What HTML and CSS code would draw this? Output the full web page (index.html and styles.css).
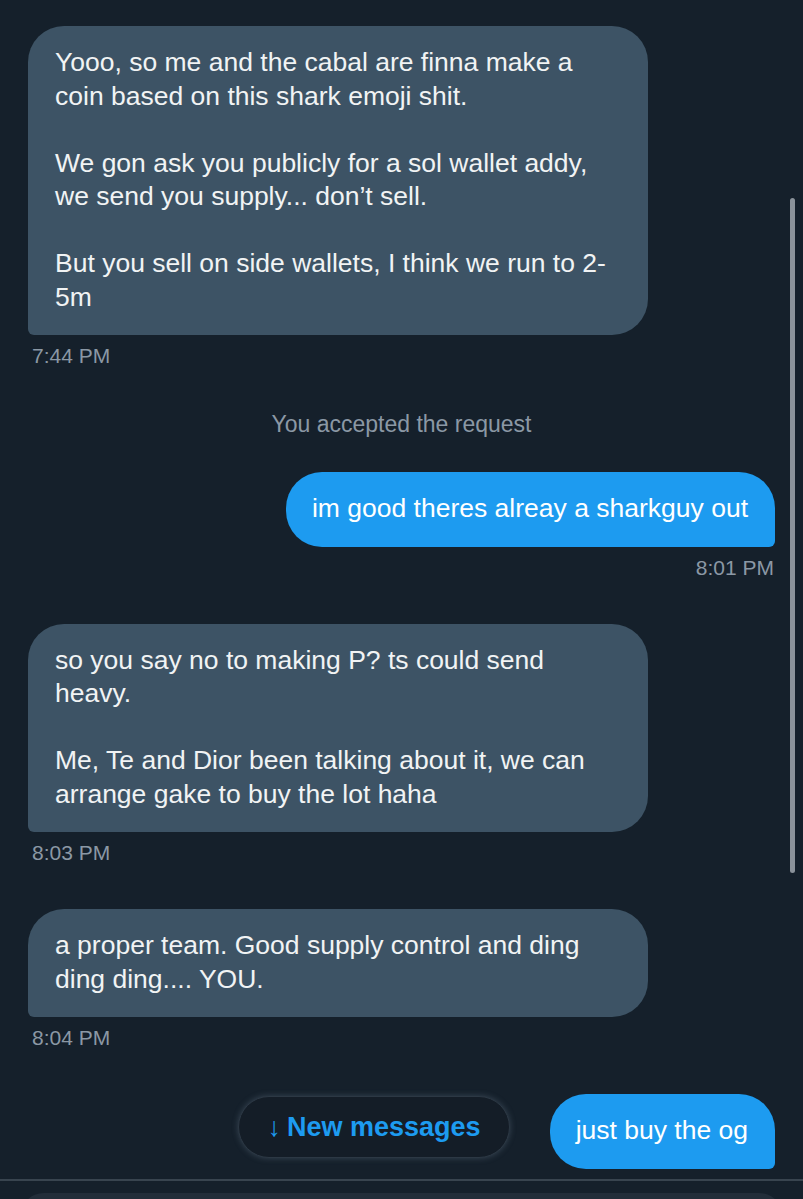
FILE: index.html
```html
<!DOCTYPE html>
<html>
<head>
<meta charset="utf-8">
<link rel="stylesheet" href="styles.css">
</head>
<body>
<div class="screen">
  <div class="chat">
    <div class="group in">
      <div class="bubble">Yooo, so me and the cabal are finna make a coin based on this shark emoji shit.<br><br>We gon ask you publicly for a sol wallet addy, we send you supply... don’t sell.<br><br>But you sell on side wallets, I think we run to 2-5m</div>
      <div class="time">7:44 PM</div>
    </div>
    <div class="system">You accepted the request</div>
    <div class="group out first-out">
      <div class="bubble">im good theres alreay a sharkguy out</div>
      <div class="time">8:01 PM</div>
    </div>
    <div class="group in">
      <div class="bubble">so you say no to making P? ts could send heavy.<br><br>Me, Te and Dior been talking about it, we can arrange gake to buy the lot haha</div>
      <div class="time">8:03 PM</div>
    </div>
    <div class="group in">
      <div class="bubble">a proper team. Good supply control and ding ding ding.... YOU.</div>
      <div class="time">8:04 PM</div>
    </div>
    <div class="group out last">
      <div class="bubble">just buy the og</div>
    </div>
    <div class="new-pill"><span class="arrow">↓</span> New messages</div>
    <div class="scrollbar"></div>
  </div>
  <div class="composer-bar">
    <div class="composer"></div>
  </div>
</div>
</body>
</html>
```
FILE: styles.css
```css
html, body {
  margin: 0;
  padding: 0;
  background: #15202b;
}
body {
  font-family: "Liberation Sans", Arial, sans-serif;
  color: #f1f3f4;
}
.screen {
  width: 803px;
  height: 1199px;
  overflow: hidden;
  display: flex;
  flex-direction: column;
}
.chat {
  position: relative;
  flex-shrink: 0;
  display: flex;
  flex-direction: column;
  padding: 26px 28px 10px 28px;
}
.group {
  display: flex;
  flex-direction: column;
  margin-bottom: 42px;
}
.group.in { align-items: flex-start; }
.group.out { align-items: flex-end; }
.group.last { margin-bottom: 0; }
.bubble {
  padding: 20px 27px 21px 27px;
  font-size: 26.5px;
  line-height: 33.5px;
  border-radius: 36px;
}
.in .bubble {
  background: #3d5365;
  border-bottom-left-radius: 6px;
  width: 560px;
  padding-right: 33px;
}
.out .bubble {
  background: #1d9bf0;
  color: #ffffff;
  border-bottom-right-radius: 6px;
  padding-left: 26px;
}
.time {
  margin-top: 7px;
  font-size: 21px;
  line-height: 28px;
  color: #8b98a5;
  padding-left: 4px;
}
.out .time { padding-left: 0; padding-right: 1px; }
.system {
  text-align: center;
  font-size: 23px;
  line-height: 28px;
  color: #8b98a5;
  margin-top: -2px;
  margin-bottom: 34px;
}
.new-pill {
  position: absolute;
  left: 238px;
  top: 1096px;
  width: 272px;
  height: 62px;
  box-sizing: border-box;
  border-radius: 31px;
  background: #141d27;
  border: 1px solid #2c3844;
  box-shadow: 0 0 6px rgba(120, 140, 160, 0.35);
  display: flex;
  align-items: center;
  justify-content: center;
  gap: 6px;
  color: #1d9bf0;
  font-weight: 700;
  font-size: 27px;
}
.new-pill .arrow { font-weight: 700; }
.scrollbar {
  position: absolute;
  left: 790px;
  top: 198px;
  width: 5px;
  height: 675px;
  border-radius: 3px;
  background: #8a929a;
}
.composer-bar {
  border-top: 2px solid #38444f;
  padding: 12px 20px 0 20px;
  flex: 1;
}
.composer {
  height: 60px;
  background: #222d39;
  border-radius: 24px;
}
```
